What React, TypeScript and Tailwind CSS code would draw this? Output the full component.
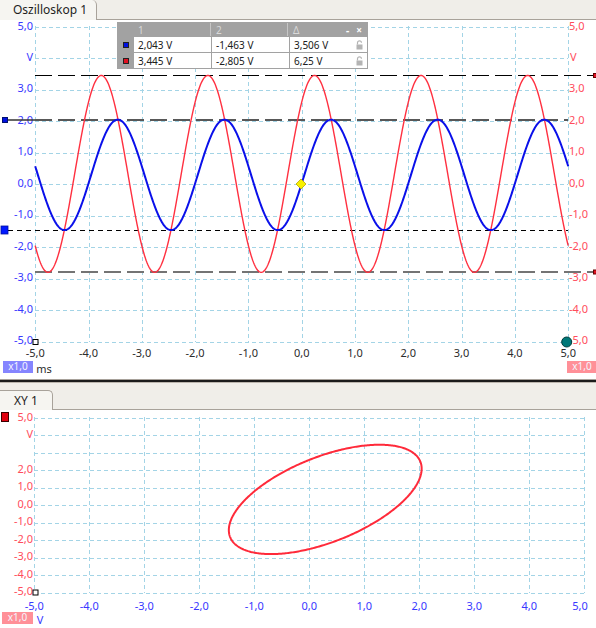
import React from 'react';

// scope geometry (page pixels)
const TX = (t: number) => 301.7 + 53.3 * t;
const TY = (v: number) => 184 - 31.5 * v;
const XX = (v: number) => 309.3 + 55 * v;
const XY = (v: number) => 505 - 17.5 * v;

const red = (t: number) => 0.32 + 3.125 * Math.cos(Math.PI * (t - 0.24));
const blue = (t: number) => 0.29 + 1.753 * Math.cos(Math.PI * (t - 0.55));

const ticks = [5, 4, 3, 2, 1, 0, -1, -2, -3, -4, -5];
const fmt = (v: number) => v.toFixed(1).replace('.', ',');

function tracePath(fn: (t: number) => number) {
    const pts: string[] = [];
    for (let i = 0; i <= 1000; i++) {
        const t = -5 + i * 0.01;
        pts.push(`${TX(t).toFixed(2)},${TY(fn(t)).toFixed(2)}`);
    }
    return 'M' + pts.join('L');
}

function xyPath() {
    const pts: string[] = [];
    for (let i = 0; i <= 400; i++) {
        const t = i * 0.005;
        pts.push(`${XX(blue(t)).toFixed(2)},${XY(red(t)).toFixed(2)}`);
    }
    return 'M' + pts.join('L') + 'Z';
}

const GRID = '#a3d4e6';

function Badge({ x, y, w, fill, text }: { x: number; y: number; w: number; fill: string; text: string }) {
    return (
        <g>
            <rect x={x} y={y} width={w} height={12} fill={fill} />
            <text x={x + w / 2} y={y + 6.5} fill="#f4f4ff" fontSize={10} textAnchor="middle" dominantBaseline="middle">
                {text}
            </text>
        </g>
    );
}

function LockIcon() {
    return (
        <svg width="7" height="10" viewBox="0 0 7 10">
            <path d="M1.5 4.5V2.8a2 2 0 0 1 4 0" fill="none" stroke="#b4b4b4" strokeWidth="1.2" />
            <rect x="0.5" y="4.5" width="6" height="5" fill="#b4b4b4" />
        </svg>
    );
}

function Measurements() {
    const rows = [
        { color: 'bg-[#0010e0]', a: '2,043 V', b: '-1,463 V', d: '3,506 V' },
        { color: 'bg-[#e01020]', a: '3,445 V', b: '-2,805 V', d: '6,25 V' },
    ];
    return (
        <div className="absolute left-[117px] top-[2px] w-[251px] border border-[#a2a2a2] bg-[#a2a2a2] text-[10px] leading-none">
            <div className="grid grid-cols-[15px_77px_77px_1fr] h-[13px] text-[#d9d9d9]">
                <div />
                <div className="flex items-center pl-[5px]">1</div>
                <div className="flex items-center pl-[5px] border-l border-[#c6c6c6]">2</div>
                <div className="flex items-center justify-between pl-[5px] pr-[5px] border-l border-[#c6c6c6]">
                    <span>Δ</span>
                    <span className="flex gap-[7px] text-white font-bold">
                        <span>-</span>
                        <span>×</span>
                    </span>
                </div>
            </div>
            {rows.map((r, i) => (
                <div key={i} className="grid grid-cols-[15px_77px_77px_1fr] gap-x-px h-[15px] mt-px text-[#202020]">
                    <div className="flex items-center justify-center">
                        <div className={`w-[6px] h-[6px] border border-[#202020] ${r.color}`} />
                    </div>
                    <div className="bg-white flex items-center pl-[4px]">{r.a}</div>
                    <div className="bg-white flex items-center pl-[4px]">{r.b}</div>
                    <div className="bg-white flex items-center justify-between pl-[4px] pr-[4px]">
                        <span>{r.d}</span>
                        <LockIcon />
                    </div>
                </div>
            ))}
        </div>
    );
}

function ScopePlot() {
    return (
        <div className="relative h-[359px] bg-white">
            <svg width="596" height="359" viewBox="0 20 596 359" className="block overflow-visible">
                {/* grid */}
                <g stroke={GRID} strokeWidth="1" strokeDasharray="4 3" shapeRendering="crispEdges">
                    {ticks.map(v => (
                        <line key={'h' + v} x1={35} x2={568} y1={Math.round(TY(v)) + 0.5} y2={Math.round(TY(v)) + 0.5} />
                    ))}
                    {ticks.map(v => (
                        <line key={'v' + v} x1={Math.round(TX(v)) + 0.5} x2={Math.round(TX(v)) + 0.5} y1={26} y2={342} />
                    ))}
                </g>

                {/* left axis, channel 1 */}
                <g fill="#3838ff" fontSize={11} textAnchor="end" dominantBaseline="middle">
                    {ticks.map(v => (
                        <text key={v} x={33} y={v === 5 ? 27.5 : TY(v)}>{v === 4 ? 'V' : fmt(v)}</text>
                    ))}
                </g>
                {/* right axis, channel 2 */}
                <g fill="#ff4c5c" fontSize={11} textAnchor="start" dominantBaseline="middle">
                    {ticks.map(v => (
                        <text key={v} x={v === 4 ? 570 : 569} y={v === 5 ? 27.5 : TY(v)}>{v === 4 ? 'V' : fmt(v)}</text>
                    ))}
                </g>
                {/* time axis */}
                <g fill="#2c2c2c" fontSize={11} textAnchor="middle" dominantBaseline="middle">
                    {ticks.map(v => (
                        <text key={v} x={TX(v)} y={354}>{fmt(v)}</text>
                    ))}
                    <text x={44} y={370}>ms</text>
                </g>

                {/* cursor lines */}
                <line x1={35} x2={593} y1={75.5} y2={75.5} stroke="#000" strokeWidth="1.2" strokeDasharray="17 6" />
                <line x1={7} x2={35} y1={120} y2={120} stroke="#333" strokeWidth="1.5" />
                <line x1={35} x2={568} y1={120} y2={120} stroke="#585858" strokeWidth="2" strokeDasharray="17 6" />
                <line x1={8} x2={568} y1={230.5} y2={230.5} stroke="#000" strokeWidth="1.2" strokeDasharray="5 4" />
                <line x1={35} x2={593} y1={272} y2={272} stroke="#747474" strokeWidth="2" strokeDasharray="17 6" />

                {/* traces */}
                <path d={tracePath(red)} fill="none" stroke="#ff3040" strokeWidth="1.4" />
                <path d={tracePath(blue)} fill="none" stroke="#0a10ea" strokeWidth="2" />

                {/* markers */}
                <rect x={2.5} y={117.5} width={5} height={5} fill="#0010e0" stroke="#001070" />
                <rect x={1} y={226} width={7} height={8} fill="#0018ff" stroke="#0010a0" strokeWidth="0.8" />
                <rect x={593.5} y={73.5} width={4} height={4} fill="#e01020" stroke="#600" />
                <rect x={593.5} y={270} width={4} height={4} fill="#e01020" stroke="#600" />
                <rect x={33} y={339.5} width={5} height={5} fill="#fff" stroke="#000" />
                <polygon points="301,179 306,184 301,189 296,184" fill="#f8f000" stroke="#b8a800" strokeWidth="0.8" />
                <circle cx={566.7} cy={342} r={5} fill="#007878" stroke="#003c3c" strokeWidth="1" />

                <Badge x={3} y={361} w={30} fill="#8585ff" text="x1,0" />
                <Badge x={567} y={361} w={30} fill="#ff9098" text="x1,0" />
            </svg>
            <Measurements />
        </div>
    );
}

function XYPlot() {
    const left = [5, 4, 2, 1, 0, -1, -2, -3, -4, -5];
    return (
        <div className="h-[218px] bg-white">
            <svg width="596" height="218" viewBox="0 410 596 218" className="block overflow-visible">
                <g stroke={GRID} strokeWidth="1" strokeDasharray="4 3" shapeRendering="crispEdges">
                    {ticks.map(v => (
                        <line key={'h' + v} x1={34} x2={585} y1={Math.round(XY(v)) + 0.5} y2={Math.round(XY(v)) + 0.5} />
                    ))}
                    {ticks.map(v => (
                        <line key={'v' + v} x1={Math.round(XX(v)) + 0.5} x2={Math.round(XX(v)) + 0.5} y1={417} y2={593} />
                    ))}
                </g>

                <g fill="#ff4c5c" fontSize={11} textAnchor="end" dominantBaseline="middle">
                    {left.map(v => (
                        <text key={v} x={33} y={v === 5 ? 418 : XY(v)}>{v === 4 ? 'V' : fmt(v)}</text>
                    ))}
                </g>
                <g fill="#3838ff" fontSize={11} textAnchor="middle" dominantBaseline="middle">
                    {ticks.map(v => (
                        <text key={v} x={v === 5 ? 580 : XX(v)} y={607}>{fmt(v)}</text>
                    ))}
                    <text x={40} y={621}>V</text>
                </g>

                <path d={xyPath()} fill="none" stroke="#ff2a3a" strokeWidth="2" strokeLinejoin="round" />

                <rect x={1.5} y={412.5} width={7} height={9} fill="#e00010" stroke="#3a0000" />
                <rect x={33} y={590} width={5} height={5} fill="#fff" stroke="#000" />

                <Badge x={2} y={612} w={31} fill="#ff9098" text="x1,0" />
            </svg>
        </div>
    );
}

export default function App() {
    return (
        <div className="w-[596px] h-[628px] flex flex-col overflow-hidden bg-white font-['Noto_Sans',sans-serif]">
            {/* top tab strip */}
            <div className="flex h-[20px] bg-[#f0eee9]">
                <div className="w-[97px] h-full bg-[#f6f5f1] border-r border-[#a8a29a] rounded-tr-[5px] flex items-center pl-[13px] text-[12px] text-[#1e1e1e]">
                    Oszilloskop 1
                </div>
                <div className="flex-1 border-b border-[#a8a29a]" />
            </div>

            <ScopePlot />

            {/* splitter */}
            <div className="h-[4px] border-t border-b border-t-[#a7a19a] border-b-[#bcb6ae] bg-[#1c1c1c]" />

            {/* XY tab strip */}
            <div className="flex items-end h-[27px] bg-[#f0eee9]">
                <div className="w-[53px] h-[20px] bg-[#f6f5f1] border-t border-r border-[#a8a29a] rounded-tr-[5px] flex items-center pl-[14px] text-[12px] text-[#1e1e1e]">
                    XY 1
                </div>
                <div className="flex-1 h-full border-b border-[#a8a29a]" />
            </div>

            <XYPlot />
        </div>
    );
}
